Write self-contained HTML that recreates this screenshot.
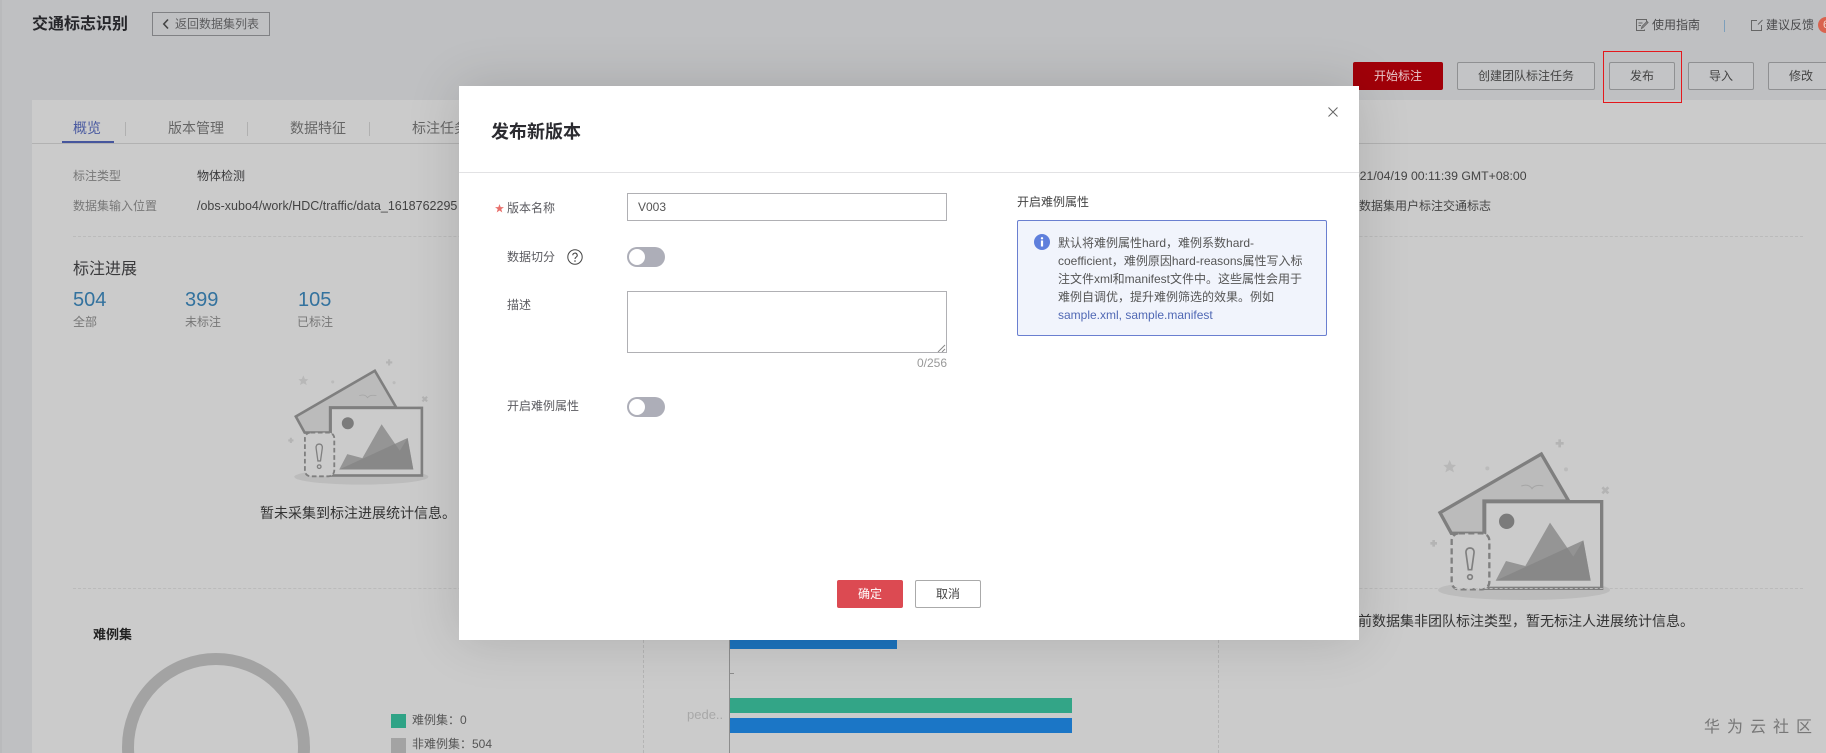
<!DOCTYPE html>
<html lang="zh"><head><meta charset="utf-8"><title>发布新版本</title>
<style>
html,body{margin:0;padding:0;width:1826px;height:753px;overflow:hidden;background:#bfc0c2}
body{font-family:"Liberation Sans","Noto Sans CJK SC",sans-serif;font-size:12px;color:#3a3a3c}
#r{position:absolute;left:0;top:0;width:1826px;height:753px;overflow:hidden;background:#bfc0c2;filter:blur(.3px)}
.a{position:absolute;white-space:nowrap}
.t{position:absolute;white-space:nowrap;line-height:18px;transform:translateY(-9px)}
.btn{position:absolute;top:62px;height:26px;line-height:26px;border:1px solid #8f9092;border-radius:2px;text-align:center;color:#444;box-sizing:content-box;background:#c3c4c6}
.sep{position:absolute;width:1px;height:14px;top:122px;background:#b0b0b0}
.g{color:#777}
.tog{position:absolute;left:627px;width:38px;height:20px;border-radius:10px;background:#adaeb8}
.tog:after{content:"";position:absolute;left:2px;top:2px;width:16px;height:16px;border-radius:50%;background:#fff}
</style></head><body><div id="r">
<div class="a" style="left:0;top:0;width:2px;height:753px;background:#b9babc"></div>

<div class="t" style="left:32px;top:25px;font-size:16px;font-weight:bold;color:#26262a">交通标志识别</div>
<div class="a" style="left:152px;top:12px;width:116px;height:22px;border:1px solid #808184"></div>
<svg class="a" style="left:161px;top:18px" width="10" height="12" viewBox="0 0 10 12"><path d="M7 1.500 2.800 6 7 10.500" fill="none" stroke="#444" stroke-width="1.600"/></svg>
<div class="t" style="left:175px;top:24px;color:#5c5c5e">返回数据集列表</div>

<svg class="a" style="left:1635px;top:18px" width="14" height="14" viewBox="0 0 14 14" fill="none" stroke="#666" stroke-width="1"><path d="M9.500 11.500v1H1.500v-11h10v2M3.500 5h4M3.500 7.500h2.500M6.500 10.500l.5-2 5-5 1 1-5 5z"/></svg>
<div class="t" style="left:1652px;top:25px;color:#4a4a4c">使用指南</div>
<div class="a" style="left:1724px;top:20px;width:1px;height:12px;background:#7d9fbb"></div>
<svg class="a" style="left:1750px;top:18px" width="14" height="14" viewBox="0 0 14 14" fill="none" stroke="#666" stroke-width="1"><path d="M7 2.500H1.500v10h10V7M8 6.500l4.500-4.500"/></svg>
<div class="t" style="left:1766px;top:25px;color:#4a4a4c">建议反馈</div>
<div class="a" style="left:1818px;top:17px;width:8px;height:16px;overflow:hidden"><div style="width:16px;height:16px;border-radius:50%;background:#d9634f;color:#f3d8d0;font-size:11px;line-height:16px;text-align:center">6</div></div>

<div class="btn" style="left:1353px;width:90px;top:62px;height:28px;line-height:28px;border:0;background:#a10009;color:#e9c9cb">开始标注</div>
<div class="btn" style="left:1457px;width:136px">创建团队标注任务</div>
<div class="btn" style="left:1609px;width:64px">发布</div>
<div class="btn" style="left:1688px;width:64px">导入</div>
<div class="a" style="left:1768px;top:62px;width:58px;height:28px;overflow:hidden"><div class="btn" style="left:0;top:0;width:64px">修改</div></div>

<!-- panel -->
<div class="a" style="left:32px;top:100px;width:1794px;height:653px;background:#cbcbcb"></div>
<div class="a" style="left:1603px;top:51px;width:77px;height:50px;border:1px solid #e4181c"></div>
<div class="a" style="left:32px;top:143px;width:1794px;height:1px;background:#b2b2b2"></div>
<div class="a" style="left:62px;top:141px;width:52px;height:2px;background:#46569d"></div>
<div class="t" style="left:73px;top:128px;font-size:14px;color:#4a5aa0">概览</div>
<div class="sep" style="left:125px"></div>
<div class="t" style="left:168px;top:128px;font-size:14px;color:#666">版本管理</div>
<div class="sep" style="left:247px"></div>
<div class="t" style="left:290px;top:128px;font-size:14px;color:#666">数据特征</div>
<div class="sep" style="left:369px"></div>
<div class="t" style="left:412px;top:128px;font-size:14px;color:#666">标注任务</div>

<div class="t g" style="left:73px;top:176px">标注类型</div>
<div class="t" style="left:197px;top:176px">物体检测</div>
<div class="t g" style="left:73px;top:206px">数据集输入位置</div>
<div class="t" style="left:197px;top:206px;color:#444;font-size:12.5px">/obs-xubo4/work/HDC/traffic/data_1618762295</div>
<div class="t" style="left:1346px;top:176px;color:#444;font-size:12.300px">2021/04/19 00:11:39 GMT+08:00</div>
<div class="t" style="left:1347px;top:206px;color:#444">为数据集用户标注交通标志</div>
<div class="a" style="left:73px;top:236px;width:1730px;border-top:1px dashed #bbb"></div>

<div class="t" style="left:73px;top:270px;font-size:16px;color:#3a3a3c">标注进展</div>
<div class="t" style="left:73px;top:300px;font-size:20px;color:#33729e">504</div>
<div class="t" style="left:185px;top:300px;font-size:20px;color:#33729e">399</div>
<div class="t" style="left:298px;top:300px;font-size:20px;color:#33729e">105</div>
<div class="t g" style="left:73px;top:322px">全部</div>
<div class="t g" style="left:185px;top:322px">未标注</div>
<div class="t g" style="left:297px;top:322px">已标注</div>

<svg class="a" style="left:249px;top:344px" width="234" height="172" viewBox="0 0 900 660"><g>
<ellipse cx="432" cy="510" rx="258" ry="30" fill="#bcbcbc"/>
<path d="M180 278 484 102 566 243H312V340H214z" fill="#bbb" stroke="#7f7f7f" stroke-width="10"/>
<path d="M424 198q22-8 32 8q10-14 34-8" fill="none" stroke="#a5a5a5" stroke-width="3"/>
<rect x="314" y="245" width="351" height="260" fill="#cbcbcb" stroke="#7f7f7f" stroke-width="10"/>
<circle cx="380" cy="304" r="23" fill="#7b7b7b"/>
<path d="M347 482 378 423 436 438 510 308 580 410 610 361 632 482z" fill="#959595"/>
<path d="M347 482 610 361 632 482z" fill="#858585" opacity=".8"/>
<rect x="215" y="340" width="113" height="168" rx="22" fill="#cbcbcb" stroke="#7f7f7f" stroke-width="7" stroke-dasharray="18 10"/>
<path d="M270 384c-9 0-13 7-12 15l7 50h10l7-50c1-8-3-15-12-15z" fill="none" stroke="#808080" stroke-width="5"/>
<circle cx="270" cy="471" r="7" fill="none" stroke="#808080" stroke-width="5"/>
<path d="M539 58v24M527 70h24M667 202l18 18M685 202l-18 18M161 360v20M151 370h20" stroke="#b4b4b4" stroke-width="8"/>
<path d="M209 120l6 14 13 1-10 9 4 13-13-7-13 7 4-13-10-9 13-1z" fill="#b8b8b8"/>
<circle cx="322" cy="145" r="6" fill="#bbb"/><circle cx="558" cy="148" r="6" fill="#bbb"/>
</g></svg>
<div class="t" style="left:260px;top:513px;font-size:14px;color:#333;line-height:20px;transform:translateY(-10px)">暂未采集到标注进展统计信息。</div>

<svg class="a" style="left:1380px;top:420px" width="300" height="220" viewBox="0 0 900 660"><g>
<ellipse cx="432" cy="510" rx="258" ry="30" fill="#bcbcbc"/>
<path d="M180 278 484 102 566 243H312V340H214z" fill="#bbb" stroke="#7f7f7f" stroke-width="10"/>
<path d="M424 198q22-8 32 8q10-14 34-8" fill="none" stroke="#a5a5a5" stroke-width="3"/>
<rect x="314" y="245" width="351" height="260" fill="#cbcbcb" stroke="#7f7f7f" stroke-width="10"/>
<circle cx="380" cy="304" r="23" fill="#7b7b7b"/>
<path d="M347 482 378 423 436 438 510 308 580 410 610 361 632 482z" fill="#959595"/>
<path d="M347 482 610 361 632 482z" fill="#858585" opacity=".8"/>
<rect x="215" y="340" width="113" height="168" rx="22" fill="#cbcbcb" stroke="#7f7f7f" stroke-width="7" stroke-dasharray="18 10"/>
<path d="M270 384c-9 0-13 7-12 15l7 50h10l7-50c1-8-3-15-12-15z" fill="none" stroke="#808080" stroke-width="5"/>
<circle cx="270" cy="471" r="7" fill="none" stroke="#808080" stroke-width="5"/>
<path d="M539 58v24M527 70h24M667 202l18 18M685 202l-18 18M161 360v20M151 370h20" stroke="#b4b4b4" stroke-width="8"/>
<path d="M209 120l6 14 13 1-10 9 4 13-13-7-13 7 4-13-10-9 13-1z" fill="#b8b8b8"/>
<circle cx="322" cy="145" r="6" fill="#bbb"/><circle cx="558" cy="148" r="6" fill="#bbb"/>
</g></svg>
<div class="t" style="left:1344px;top:621px;font-size:14px;color:#333;line-height:20px;transform:translateY(-10px)">当前数据集非团队标注类型，暂无标注人进展统计信息。</div>

<div class="a" style="left:73px;top:588px;width:1730px;border-top:1px dashed #bbb"></div>
<div class="a" style="left:643px;top:600px;height:153px;border-left:1px dashed #b5b5b5"></div>
<div class="a" style="left:1218px;top:600px;height:153px;border-left:1px dashed #b5b5b5"></div>
<div class="t" style="left:93px;top:635px;font-size:13px;font-weight:bold;color:#222">难例集</div>
<svg class="a" style="left:122px;top:653px" width="188" height="100" viewBox="0 0 188 100"><circle cx="94" cy="94" r="88" fill="none" stroke="#a3a3a3" stroke-width="12"/></svg>
<div class="a" style="left:391px;top:714px;width:15px;height:14px;background:#2fa386"></div>
<div class="t" style="left:412px;top:720px;color:#555">难例集：0</div>
<div class="a" style="left:391px;top:738px;width:15px;height:15px;background:#a3a3a3"></div>
<div class="a" style="left:412px;top:735px;height:18px;line-height:18px;color:#555">非难例集：504</div>

<div class="a" style="left:729px;top:600px;width:1px;height:153px;background:#8d8d8d"></div>
<div class="a" style="left:729px;top:673px;width:5px;height:1px;background:#8d8d8d"></div>
<div class="a" style="left:730px;top:630px;width:167px;height:19px;background:#1b73bd"></div>
<div class="a" style="left:730px;top:698px;width:342px;height:15px;background:#33a587"></div>
<div class="a" style="left:730px;top:718px;width:342px;height:15px;background:#1b76c6"></div>
<div class="t" style="left:687px;top:715px;color:#a8a8a8;font-size:13px">pede..</div>
<div class="a" style="left:1704px;top:719px;height:18px;line-height:18px;font-size:16px;letter-spacing:7px;color:#777">华为云社区</div>

<!-- modal -->
<div class="a" style="left:459px;top:86px;width:900px;height:554px;background:#fff;box-shadow:0 0 50px rgba(0,0,0,.14)"></div>
<div class="t" style="left:491px;top:132px;font-size:18px;font-weight:bold;color:#2b2b30;line-height:24px;transform:translateY(-12px)">发布新版本</div>
<svg class="a" style="left:1327px;top:106px" width="12" height="12" viewBox="0 0 12 12"><path d="M1.500 1.500 10.500 10.500M10.500 1.500 1.500 10.500" stroke="#666" stroke-width="1"/></svg>
<div class="a" style="left:459px;top:172px;width:900px;height:1px;background:#e2e2e4"></div>

<svg class="a" style="left:495px;top:204px" width="9" height="9" viewBox="0 0 10 10"><path d="M5 0 6.300 3.500H10L7 5.700 8.100 9.500 5 7.200 1.900 9.500 3 5.700 0 3.500H3.700z" fill="#e8706c"/></svg>
<div class="t" style="left:507px;top:208px;color:#5b5b60">版本名称</div>
<div class="a" style="left:627px;top:193px;width:318px;height:26px;border:1px solid #b0b0b4;line-height:26px;text-indent:10px;color:#555">V003</div>
<div class="t" style="left:507px;top:257px;color:#5b5b60">数据切分</div>
<svg class="a" style="left:567px;top:249px" width="16" height="16" viewBox="0 0 16 16" fill="none"><circle cx="8" cy="8" r="7.200" stroke="#444" stroke-width="1"/><path d="M5.800 6.300a2.200 2.200 0 1 1 3.300 1.900c-.8.500-1.100.9-1.100 1.800" stroke="#444" stroke-width="1.100"/><circle cx="8" cy="12" r=".8" fill="#444"/></svg>
<div class="tog" style="top:247px"></div>
<div class="t" style="left:507px;top:305px;color:#5b5b60">描述</div>
<div class="a" style="left:627px;top:291px;width:318px;height:60px;border:1px solid #b0b0b4"></div>
<svg class="a" style="left:937px;top:344px" width="9" height="8" viewBox="0 0 9 8"><path d="M1 8 8 1M5 8 8 5" stroke="#888" stroke-width="1"/></svg>
<div class="t" style="left:900px;top:363px;width:47px;text-align:right;color:#999">0/256</div>
<div class="t" style="left:507px;top:406px;color:#5b5b60">开启难例属性</div>
<div class="tog" style="top:397px"></div>

<div class="t" style="left:1017px;top:202px;color:#444">开启难例属性</div>
<div class="a" style="left:1017px;top:220px;width:308px;height:114px;background:#f1f4fc;border:1px solid #6a7fd0;border-radius:2px"></div>
<svg class="a" style="left:1034px;top:234px" width="16" height="16" viewBox="0 0 16 16"><circle cx="8" cy="8" r="8" fill="#5f7fdc"/><circle cx="8" cy="4.300" r="1.200" fill="#fff"/><rect x="6.900" y="6.500" width="2.200" height="6" fill="#fff"/></svg>
<div class="a" style="left:1058px;top:234px;width:250px;line-height:18px;color:#555;white-space:normal">默认将难例属性hard，难例系数hard-<br>coefficient，难例原因hard-reasons属性写入标<br>注文件xml和manifest文件中。这些属性会用于<br>难例自调优，提升难例筛选的效果。例如<br><span style="color:#5068b4">sample.xml, sample.manifest</span></div>

<div class="a" style="left:837px;top:580px;width:66px;height:28px;line-height:28px;text-align:center;background:#dc4a52;border-radius:2px;color:#fff">确定</div>
<div class="a" style="left:915px;top:580px;width:64px;height:26px;line-height:26px;text-align:center;border:1px solid #aaa;border-radius:2px;color:#444">取消</div>
</div></body></html>
